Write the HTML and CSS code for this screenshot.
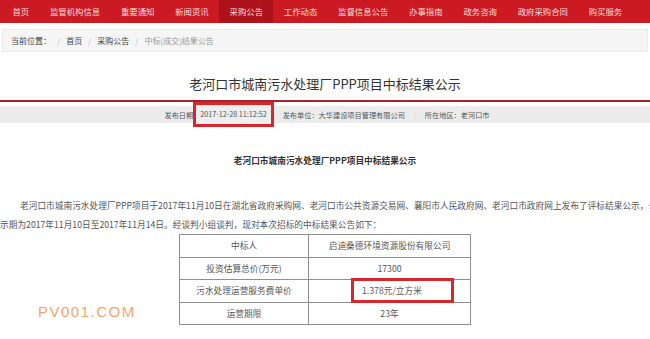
FILE: index.html
```html
<!DOCTYPE html>
<html lang="zh-CN">
<head>
  <meta charset="UTF-8">
  <title>老河口市城南污水处理厂PPP项目中标结果公示</title>
  <link rel="stylesheet" href="styles.css">
</head>
<body>
  <!-- 顶部导航 -->
  <div class="nav">
    <a class="nav-item">首页</a>
    <a class="nav-item">监管机构信息</a>
    <a class="nav-item">重要通知</a>
    <a class="nav-item">新闻资讯</a>
    <a class="nav-item active">采购公告</a>
    <a class="nav-item">工作动态</a>
    <a class="nav-item">监督信息公告</a>
    <a class="nav-item">办事指南</a>
    <a class="nav-item">政务咨询</a>
    <a class="nav-item">政府采购合同</a>
    <a class="nav-item">购买服务</a>
  </div>

  <div class="crumbs">
    <span>当前位置：</span>
    <span class="sep">/</span>
    <span>首页</span>
    <span class="sep">/</span>
    <span>采购公告</span>
    <span class="sep">/</span>
    <span class="current">中标(成交)结果公告</span>
  </div>

  <h1 class="title">老河口市城南污水处理厂PPP项目中标结果公示</h1>
  <div class="rule"></div>

  <div class="meta">
    <span>发布日期</span>
    <span class="date mark">2017-12-28 11:12:52</span>
    <span>发布单位：大华建设项目管理有限公司</span>
    <span class="bar">|</span>
    <span>所在地区：老河口市</span>
  </div>

  <div class="article">
    <h2 class="subtitle">老河口市城南污水处理厂PPP项目中标结果公示</h2>
    <p class="text">
      <span class="line first">老河口市城南污水处理厂PPP项目于2017年11月10日在湖北省政府采购网、老河口市公共资源交易网、襄阳市人民政府网、老河口市政府网上发布了评标结果公示，公</span>
      <span class="line">示期为2017年11月10日至2017年11月14日。经谈判小组谈判，现对本次招标的中标结果公告如下：</span>
    </p>

    <table class="result">
      <tr>
        <td class="label">中标人</td>
        <td>启迪桑德环境资源股份有限公司</td>
      </tr>
      <tr>
        <td class="label">投资估算总价(万元)</td>
        <td>17300</td>
      </tr>
      <tr>
        <td class="label">污水处理运营服务费单价</td>
        <td><span class="price mark">1.378元/立方米</span></td>
      </tr>
      <tr>
        <td class="label">运营期限</td>
        <td>23年</td>
      </tr>
    </table>
  </div>

  <div class="watermark">PV001.COM</div>
</body>
</html>
```

FILE: styles.css
```css
/* General reset */
* {
  margin: 0;
  padding: 0;
  box-sizing: border-box;
}

body {
  font-family: "Noto Sans CJK SC", "Noto Sans", sans-serif;
  background: #fff;
  color: #555;
  width: 650px;
  height: 339px;
  overflow: hidden;
  position: relative;
}

/* 导航 */
.nav {
  display: flex;
  height: 23px;
  padding-left: 2px;
  background: #cb1a21;
}

.nav-item {
  padding: 0 10.4px;
  font-size: 8.4px;
  line-height: 23px;
  color: #f7dcdc;
  white-space: nowrap;
}

.nav-item.active {
  background: #ad1119;
}

/* 面包屑 */
.crumbs {
  margin: 6px 2px 0;
  height: 23px;
  padding-left: 8px;
  background: #f5f5f5;
  border: 1px solid #ebebeb;
  font-size: 8px;
  line-height: 21px;
  color: #444;
  display: flex;
  gap: 5px;
}

.crumbs .sep {
  color: #bbb;
  margin: 0 1px;
}

.crumbs .current {
  color: #999;
}

/* 标题 */
.title {
  margin-top: 22px;
  font-size: 13px;
  font-weight: normal;
  line-height: 20px;
  text-align: center;
  color: #333;
}

.rule {
  margin-top: 6px;
  height: 2px;
  background: #a3242a;
}

.meta {
  margin-top: 4px;
  height: 17px;
  padding-left: 4px;
  background: #ececec;
  display: flex;
  justify-content: center;
  align-items: center;
  gap: 9px;
  font-size: 7.2px;
  color: #555;
  white-space: nowrap;
}

.meta .bar {
  color: #ccc;
}

.mark {
  border: 3px solid #d8262d;
}

.meta .date {
  height: 25px;
  line-height: 19px;
  padding: 0 4px;
  margin-left: -9px;
  background: #eeeeee;
}

/* 正文 */
.article {
  overflow: hidden;
}

.subtitle {
  margin-top: 30px;
  font-size: 8.7px;
  font-weight: bold;
  line-height: 16px;
  text-align: center;
  color: #333;
}

.text {
  margin-top: 27px;
  font-size: 8.7px;
  line-height: 19px;
  color: #555;
  white-space: nowrap;
}

.text .line {
  display: block;
}

.text .line.first {
  text-indent: 20px;
}

.result {
  width: 292px;
  margin: 0 auto;
  border-collapse: collapse;
  font-size: 8.7px;
  color: #555;
}

.result td {
  height: 22.5px;
  border: 1px solid #8f8f8f;
  text-align: center;
  white-space: nowrap;
}

.result .label {
  width: 129px;
}

.price {
  display: inline-block;
  width: 103px;
  height: 25px;
  line-height: 19px;
  margin: -3px 0 -3px 26px;
  padding-left: 8px;
  text-align: left;
  vertical-align: middle;
}

/* 水印 */
.watermark {
  position: absolute;
  left: 38px;
  top: 303px;
  font-family: "Liberation Sans", Arial, sans-serif;
  font-size: 15px;
  letter-spacing: 1.5px;
  color: #f2a46c;
}
```
